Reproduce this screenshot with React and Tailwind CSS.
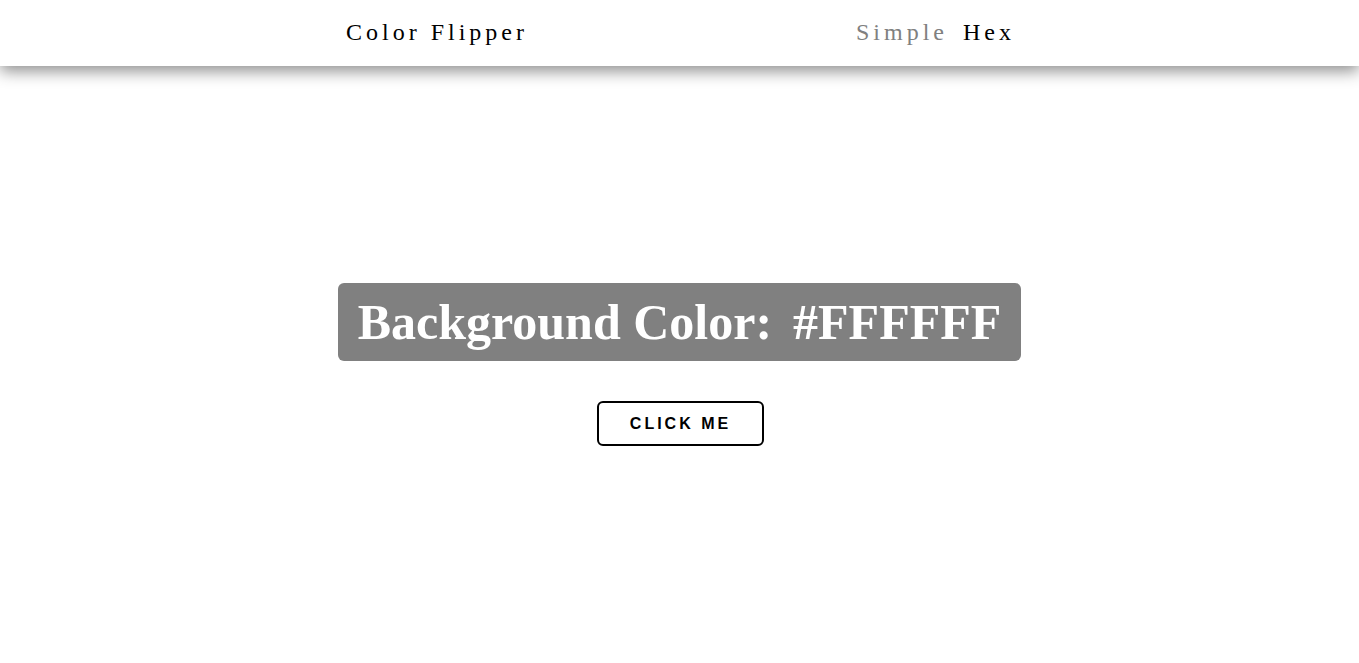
export default function App() {
  return (
    <div className="min-h-screen bg-white" style={{ fontFamily: '"Liberation Serif", serif' }}>
      <nav className="h-[66px] bg-white shadow-[0_5px_15px_rgba(0,0,0,0.45)] relative z-10 flex items-center">
        <div className="w-[671px] mx-auto flex items-center justify-between pl-[2px] pb-[2px]">
          <h4 className="text-[24px] tracking-[4px] text-black font-normal">Color Flipper</h4>
          <ul className="flex items-center gap-[15px] text-[24px] tracking-[4px]">
            <li className="text-[#808080]">Simple</li>
            <li className="text-black">Hex</li>
          </ul>
        </div>
      </nav>
      <main className="h-[597px] flex flex-col items-center justify-center">
        <h2 className="bg-[#808080] text-white font-bold text-[50px] leading-[54px] px-[20px] py-[12px] rounded-[6px]">
          Background Color:<span className="ml-[21px]">#FFFFFF</span>
        </h2>
        <button
          className="mt-[40px] ml-[2px] w-[167px] h-[45px] border-2 border-black rounded-[6px] bg-transparent text-black font-bold text-[16px] tracking-[3px] flex items-center justify-center"
          style={{ fontFamily: '"Liberation Sans", sans-serif' }}
        >
          CLICK ME
        </button>
      </main>
    </div>
  );
}
